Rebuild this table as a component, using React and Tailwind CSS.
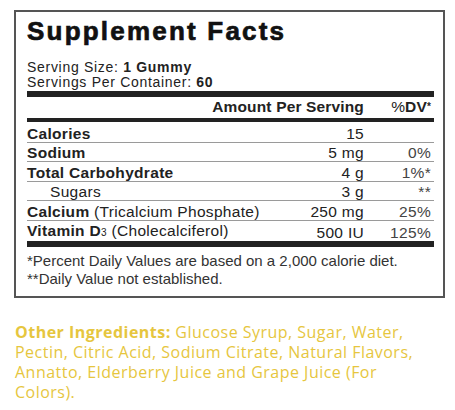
import React from 'react';

const rows = [
  { label: <b>Calories</b>, amount: '15', dv: '' },
  { label: <b>Sodium</b>, amount: '5 mg', dv: '0%' },
  { label: <b>Total Carbohydrate</b>, amount: '4 g', dv: '1%*' },
  { label: <span className="pl-[23px]">Sugars</span>, amount: '3 g', dv: '**' },
  {
    label: (
      <>
        <b>Calcium</b> (Tricalcium Phosphate)
      </>
    ),
    amount: '250 mg',
    dv: '25%',
  },
  {
    label: (
      <>
        <b>Vitamin D</b>
        <span className="text-[10px]">3</span> (Cholecalciferol)
      </>
    ),
    amount: '500 IU',
    dv: '125%',
  },
];

const Row = ({ label, amount, dv, last }) => (
  <div
    className={`flex items-end h-[19.6px] leading-[16px] whitespace-nowrap ${
      last ? '' : 'border-b-[1.5px] border-[#9a9a9a]'
    }`}
  >
    <div className="flex-1">{label}</div>
    <div className="w-[90px] text-right">{amount}</div>
    <div className="w-[70px] text-right pr-[3px] text-[#444]">{dv}</div>
  </div>
);

export default function App() {
  return (
    <div className="w-[455px] h-[410px] bg-white pt-[10px] font-['Liberation_Sans',Arial,sans-serif] text-[#222]">
      <div className="ml-[14px] w-[431px] h-[288px] border-2 border-[#555] pl-[11px] pr-[9px]">
        <h1 className="pt-[4px] text-[26px] leading-[30px] font-black tracking-[0.085em] text-[#111] [-webkit-text-stroke:0.7px_#111]">
          Supplement Facts
        </h1>
        <div className="mt-[14px] text-[14px] leading-[15px] tracking-[0.05em]">
          <p>
            Serving Size: <b>1 Gummy</b>
          </p>
          <p>
            Servings Per Container: <b>60</b>
          </p>
        </div>
        <div className="mt-[1px] h-[6px] bg-[#222]" />
        <div className="flex items-end h-[21px] leading-[16px] text-[15.5px] font-bold tracking-[0.01em]">
          <div className="flex-1" />
          <div className="text-right pb-[3px]">Amount Per Serving</div>
          <div className="w-[70px] text-right pr-[3px] pb-[3px]">
            <span className="font-normal">%</span>DV<span className="text-[10px] align-top">*</span>
          </div>
        </div>
        <div className="h-[4px] bg-[#222]" />
        <div className="text-[15.5px] tracking-[0.02em]">
          <div className="h-[1px]" />
          {rows.map((r, i) => (
            <Row key={i} {...r} last={i === rows.length - 1} />
          ))}
        </div>
        <div className="h-[6px] bg-[#222]" />
        <div className="mt-[5px] text-[15px] leading-[18px] text-[#333]">
          <p>*Percent Daily Values are based on a 2,000 calorie diet.</p>
          <p>**Daily Value not established.</p>
        </div>
      </div>
      <p className="mt-[24px] ml-[15px] w-[440px] font-['Open_Sans',sans-serif] text-[16px] leading-[20px] tracking-[0.03em] text-[#e6c63e] whitespace-nowrap">
        <b className="font-bold">Other Ingredients:</b> Glucose Syrup, Sugar, Water,
        <br />
        Pectin, Citric Acid, Sodium Citrate, Natural Flavors,
        <br />
        Annatto, Elderberry Juice and Grape Juice (For
        <br />
        Colors).
      </p>
    </div>
  );
}
